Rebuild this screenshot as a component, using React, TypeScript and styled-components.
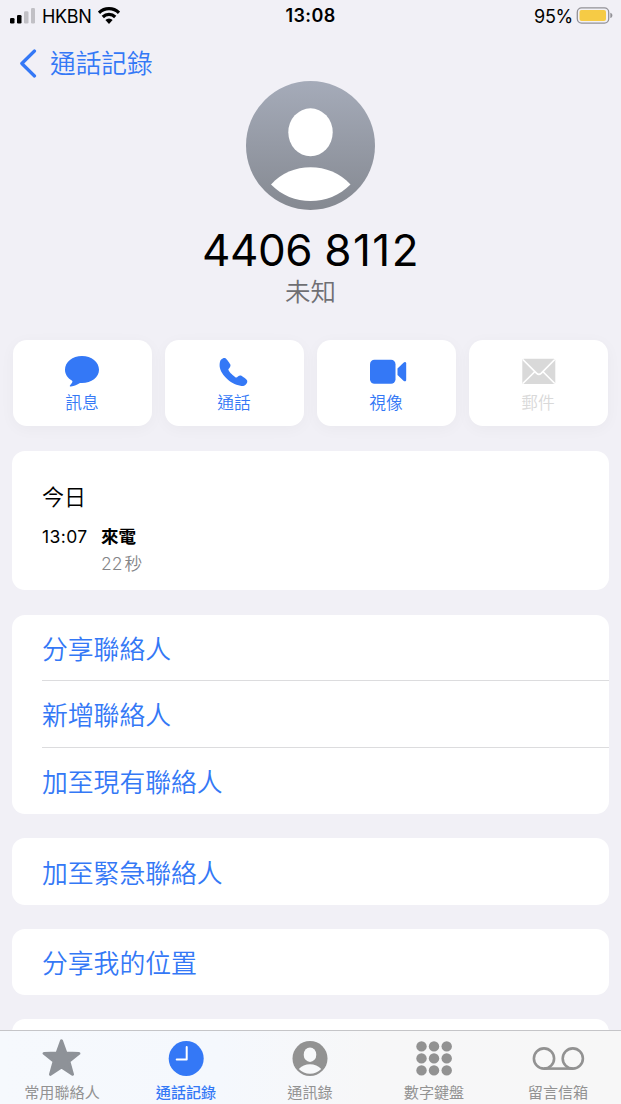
import React from 'react';
import styled, { createGlobalStyle } from 'styled-components';

const BLUE = '#3478f6';
const GRAY = '#929292';

const GlobalStyle = createGlobalStyle`
  * { box-sizing: border-box; }
  body {
    margin: 0;
    background: #f1f0f6;
    color: #000;
    font-family: Inter, "Noto Sans CJK TC", sans-serif;
  }
`;

const Screen = styled.div`
  width: 621px;
  height: 1104px;
  display: flex;
  flex-direction: column;
  overflow: hidden;
  background: #f1f0f6;
`;

const Scroll = styled.main`
  height: 1030px;
  flex: none;
  overflow: hidden;
`;

const StatusBar = styled.header`
  height: 31px;
  display: grid;
  grid-template-columns: 1fr auto 1fr;
  align-items: center;
  padding: 0 8px 0 10px;
  font-size: 18px;
  line-height: 31px;
`;

const StatusSide = styled.div<{ $end?: boolean }>`
  display: flex;
  align-items: center;
  height: 31px;
  justify-content: ${(p) => (p.$end ? 'flex-end' : 'flex-start')};
`;

const Carrier = styled.span`
  margin: 0 7px 0 7px;
  padding-top: 1px;
  letter-spacing: -0.35px;
`;

const Clock = styled.span`
  margin-right: 2px;
  font-weight: 600;
  letter-spacing: 0.4px;
`;

const Percent = styled.span`
  padding-top: 1px;
  letter-spacing: -0.3px;
  margin-right: 3px;
`;

const Back = styled.button`
  display: flex;
  align-items: center;
  gap: 13px;
  height: 50px;
  margin: 0;
  padding: 14px 0 0 19px;
  border: 0;
  background: none;
  color: ${BLUE};
  font: 350 25.7px/36px Inter, "Noto Sans CJK TC", sans-serif;
`;

const BackLabel = styled.span`
  padding-top: 1px;
`;

const Profile = styled.section`
  display: flex;
  flex-direction: column;
  align-items: center;
`;

const PhoneNumber = styled.h1`
  display: flex;
  gap: 12px;
  margin: 13px 0 0;
  padding-left: 1px;
  height: 54px;
  font-size: 44px;
  font-weight: 400;
  line-height: 54px;
`;

const DigitGroup = styled.span<{ $tracking: number }>`
  letter-spacing: ${(p) => p.$tracking}px;
`;

const Status = styled.p`
  margin: -3px 0 0;
  height: 36px;
  font-size: 25.5px;
  font-weight: 350;
  line-height: 36px;
  color: #6f6f73;
`;

const Actions = styled.nav`
  display: grid;
  grid-template-columns: repeat(4, 1fr);
  gap: 13px;
  padding: 0 13px;
  margin-top: 30.4px;
`;

const Action = styled.button<{ $disabled?: boolean }>`
  height: 86px;
  border: 0;
  border-radius: 14px;
  padding: 15px 1px 0 0;
  display: flex;
  flex-direction: column;
  align-items: center;
  background: #fff;
  box-shadow: 0 3px 16px rgba(0, 0, 0, 0.035);
  color: ${(p) => (p.$disabled ? '#d9d9d9' : BLUE)};
  font: 350 16.7px/24px Inter, "Noto Sans CJK TC", sans-serif;
  svg { display: block; margin-bottom: 2px; }
`;

const Card = styled.section`
  margin: 24px 12px 0;
  border-radius: 13px;
  background: #fff;
  overflow: hidden;
`;

const HistoryCard = styled(Card)`
  height: 139.3px;
  margin: 24.6px 12px 24.5px;
  padding: 31px 30px 0;
`;

const Day = styled.h2`
  margin: 0;
  font-size: 22px;
  font-weight: 350;
  line-height: 31px;
`;

const Call = styled.div`
  display: grid;
  grid-template-columns: 59px 1fr;
  margin-top: 10px;
  font-size: 17.5px;
  line-height: 27px;
`;

const CallTime = styled.span`
  letter-spacing: 0.4px;
`;

const CallKind = styled.span`
  font-weight: 600;
`;

const Duration = styled.span`
  grid-column: 2;
  color: #858588;
  font-weight: 350;
  word-spacing: -3px;
  line-height: 28px;
`;

const Row = styled.button`
  display: block;
  width: calc(100% - 30px);
  height: 66.7px;
  margin: 0 0 0 30px;
  padding: 3px 0 0;
  border: 0;
  border-bottom: 1px solid #dcdcde;
  background: none;
  text-align: left;
  color: ${BLUE};
  font: 350 25.8px/63px Inter, "Noto Sans CJK TC", sans-serif;
  &:not(:last-child) {
    padding-top: 4px;
    line-height: 62px;
  }
  &:last-child {
    height: 66.3px;
    border-bottom: 0;
  }
`;

const TabBar = styled.nav`
  height: 74px;
  flex: none;
  display: grid;
  grid-template-columns: repeat(5, 124px);
  border-top: 1px solid #c5c5c8;
  background: linear-gradient(90deg, #f6f9fd 0%, #f5f8fd 35%, #f7f7f8 60%, #f7f7f7 100%);
`;

const Tab = styled.button<{ $active?: boolean }>`
  display: flex;
  flex-direction: column;
  align-items: center;
  border: 0;
  padding: 7px 0 0;
  background: none;
  color: ${(p) => (p.$active ? BLUE : GRAY)};
  font: ${(p) => (p.$active ? 500 : 400)} 15.1px/22px Inter, "Noto Sans CJK TC", sans-serif;
  svg { display: block; margin-bottom: 2px; }
`;

const SignalIcon = () => (
  <svg width="25" height="17" viewBox="0 0 25 17">
    <rect x="0" y="11" width="4.5" height="5.5" rx="1.3" fill="#000" />
    <rect x="7" y="8" width="4.5" height="8.5" rx="1.3" fill="#000" />
    <rect x="14" y="4.3" width="4.5" height="12.2" rx="1.3" fill="#c1c0c5" />
    <rect x="21" y="1" width="4" height="15.5" rx="1.3" fill="#c1c0c5" />
  </svg>
);

const WifiIcon = () => (
  <svg width="22" height="18" viewBox="0 0 22 18">
    <g fill="none" stroke="#000" strokeWidth="3.2">
      <path d="M1 5.8a14.300 14.300 0 0 1 20 0" />
      <path d="M4.800 10a8.800 8.800 0 0 1 12.400 0" />
    </g>
    <path d="M7.400 13.100a4.900 4.900 0 0 1 7.200 0L11 17z" fill="#000" />
  </svg>
);

const BatteryIcon = () => (
  <svg width="37" height="17" viewBox="0 0 37 17">
    <rect x="1.300" y=".9" width="31.400" height="15.200" rx="4.300" fill="none" stroke="#929197" strokeWidth="1.300" />
    <rect x="3.500" y="3" width="26.500" height="11" rx="2" fill="#f6cb45" />
    <path d="M34.300 5.800c2.800 1 2.800 4.300 0 5.300z" fill="#929197" />
  </svg>
);

const BackIcon = () => (
  <svg width="18" height="29" viewBox="0 0 18 29">
    <path d="M15.500 2 2.800 14.500 15.500 27" fill="none" stroke="currentColor" strokeWidth="3.200" strokeLinecap="round" strokeLinejoin="round" />
  </svg>
);

const Avatar = () => (
  <svg width="129" height="129" viewBox="0 0 129 129">
    <defs>
      <linearGradient id="avatar" x1="0" y1="0" x2="0" y2="1">
        <stop offset="0" stopColor="#a5abb9" />
        <stop offset="1" stopColor="#858991" />
      </linearGradient>
    </defs>
    <circle cx="64.500" cy="64.500" r="64.500" fill="url(#avatar)" />
    <ellipse cx="64.500" cy="51.300" rx="22.200" ry="24" fill="#fff" />
    <path d="M25 103.500C45 80.500 84 80.500 104.500 103.500C83 125.500 46 125.500 25 103.500Z" fill="#fff" />
  </svg>
);

const MessageIcon = () => (
  <svg width="36" height="34" viewBox="0 0 36 34">
    <path d="M18 1C8.500 1 1 7 1 14.700c0 4.600 2.700 8.500 6.800 10.800.9.500.8 1.200.2 2.200-.6 1-1.200 1.800-1.900 2.500-.7.800-.2 1.500.8 1.400 3.400-.3 6.500-1.900 8.600-3.300.7-.4 1.400-.3 2.500-.3 9.500 0 17-5.700 17-13.300S27.500 1 18 1Z" fill="currentColor" />
  </svg>
);

const PhoneIcon = () => (
  <svg width="36" height="34" viewBox="0 0 36 34">
    <path transform="translate(-1 0)" d="M6.200 4.600C7.500 3.300 9.100 2.600 10.400 3.200c1.200.5 3.800 4.200 4.700 5.900.8 1.500.3 2.800-.7 3.900-1 1-1.300 1.500-.7 2.600 1 1.900 4.600 5.500 6.600 6.600 1.100.6 1.700.3 2.600-.6 1.100-1.100 2.400-1.500 3.900-.7 1.600.9 4.600 3.200 5.200 4.400.7 1.300.1 3-1.200 4.200-1.500 1.400-3.300 1.800-5.300 1.300C15 29.500 4.200 18 4.600 10.100c.1-2.100.3-4.200 1.600-5.500Z" fill="currentColor" />
  </svg>
);

const VideoIcon = () => (
  <svg width="42" height="34" viewBox="0 0 42 34">
    <g fill="currentColor" transform="translate(4.200 0)">
      <rect x=".8" y="4.700" width="25.500" height="24" rx="4.500" />
      <path d="M28.300 13.500 34.300 7.700c1.300-1.200 2.700-.7 2.700.9v16.200c0 1.600-1.400 2.100-2.700.9l-6-5.800z" />
    </g>
  </svg>
);

const MailIcon = () => (
  <svg width="36" height="34" viewBox="0 0 36 34">
    <g transform="translate(2 0)">
      <rect x=".300" y="3.700" width="33" height="25.300" rx="1.500" fill="currentColor" />
      <path d="M.800 4.500 14.700 18.300q2.200 2.100 4.400 0L32.800 4.500M.800 28.500 12.500 17M32.800 28.500 21.300 17" fill="none" stroke="#fff" strokeWidth="1.700" />
    </g>
  </svg>
);

const StarIcon = () => (
  <svg width="40" height="42" viewBox="0 0 40 42">
    <path d="M19.500 2.800 23.900 15 36.900 15.400 26.900 23.400 30.500 36.300 19.500 29 8.500 36.300 12.100 23.400 2.100 15.400 15.100 15Z" fill="#8e9298" stroke="#8e9298" strokeWidth="3" strokeLinejoin="round" />
  </svg>
);

const RecentIcon = () => (
  <svg width="40" height="42" viewBox="0 0 40 42">
    <circle cx="20.200" cy="20.500" r="17.500" fill="currentColor" />
    <path d="M20.700 9v12.600H10.700" fill="none" stroke="#fff" strokeWidth="2" strokeLinecap="round" strokeLinejoin="round" />
  </svg>
);

const ContactsIcon = () => (
  <svg width="40" height="42" viewBox="0 0 40 42">
    <circle cx="20" cy="20.500" r="17.500" fill="currentColor" />
    <ellipse cx="20" cy="16.700" rx="6.300" ry="7.200" fill="#f7f8fa" />
    <path d="M8.800 31C14 24.600 26 24.600 31.200 31 25.500 37.400 14.500 37.400 8.800 31Z" fill="#f7f8fa" />
  </svg>
);

const KeypadIcon = () => (
  <svg width="40" height="42" viewBox="0 0 40 42">
    {[8.4, 20.4, 32.4].map((y) =>
      [7.5, 20, 32.7].map((x) => <circle key={`${x}-${y}`} cx={x} cy={y} r="5.200" fill="currentColor" />),
    )}
  </svg>
);

const VoicemailIcon = () => (
  <svg width="54" height="42" viewBox="0 0 54 42">
    <g fill="none" stroke="currentColor" strokeWidth="2.600">
      <circle cx="13" cy="20.500" r="10.100" />
      <circle cx="41.800" cy="20.500" r="10.100" />
      <path d="M13 30.600h28.800" />
    </g>
  </svg>
);

const actions = [
  { label: '訊息', Icon: MessageIcon },
  { label: '通話', Icon: PhoneIcon },
  { label: '視像', Icon: VideoIcon },
  { label: '郵件', Icon: MailIcon, disabled: true },
];

const groups = [['分享聯絡人', '新增聯絡人', '加至現有聯絡人'], ['加至緊急聯絡人'], ['分享我的位置'], ['']];

const tabs = [
  { label: '常用聯絡人', Icon: StarIcon },
  { label: '通話記錄', Icon: RecentIcon, active: true },
  { label: '通訊錄', Icon: ContactsIcon },
  { label: '數字鍵盤', Icon: KeypadIcon },
  { label: '留言信箱', Icon: VoicemailIcon },
];

export default function App() {
  return (
    <Screen lang="zh-HK">
      <GlobalStyle />
      <Scroll>
        <StatusBar>
          <StatusSide>
            <SignalIcon />
            <Carrier>HKBN</Carrier>
            <WifiIcon />
          </StatusSide>
          <Clock>13:08</Clock>
          <StatusSide $end>
            <Percent>95%</Percent>
            <BatteryIcon />
          </StatusSide>
        </StatusBar>
        <Back>
          <BackIcon />
          <BackLabel>通話記錄</BackLabel>
        </Back>
        <Profile>
          <Avatar />
          <PhoneNumber>
            <DigitGroup $tracking={-0.4}>4406</DigitGroup>{' '}
            <DigitGroup $tracking={1.5}>8112</DigitGroup>
          </PhoneNumber>
          <Status>未知</Status>
        </Profile>
        <Actions>
          {actions.map(({ label, Icon, disabled }) => (
            <Action key={label} $disabled={disabled}>
              <Icon />
              {label}
            </Action>
          ))}
        </Actions>
        <HistoryCard>
          <Day>今日</Day>
          <Call>
            <CallTime>13:07</CallTime>
            <CallKind>來電</CallKind>
            <Duration>22 秒</Duration>
          </Call>
        </HistoryCard>
        {groups.map((rows, i) => (
          <Card key={i}>
            {rows.map((label) => (
              <Row key={label}>{label}</Row>
            ))}
          </Card>
        ))}
      </Scroll>
      <TabBar>
        {tabs.map(({ label, Icon, active }) => (
          <Tab key={label} $active={active}>
            <Icon />
            {label}
          </Tab>
        ))}
      </TabBar>
    </Screen>
  );
}
